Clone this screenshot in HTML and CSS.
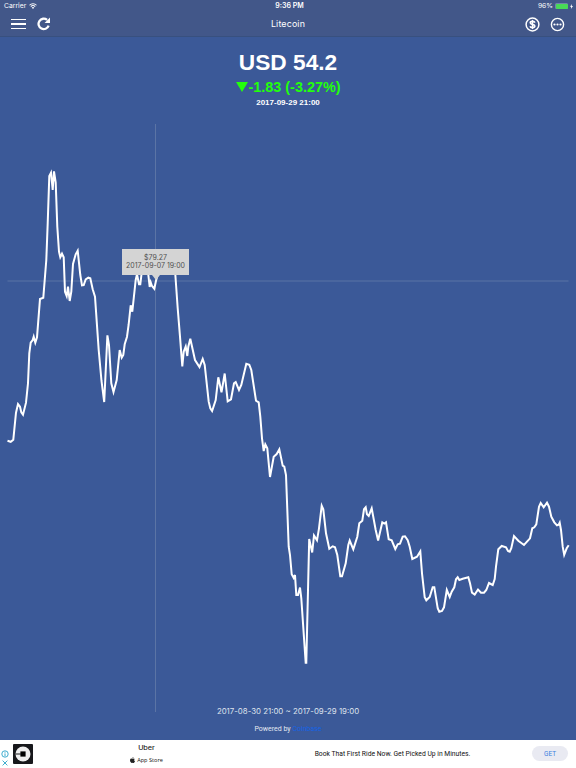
FILE: index.html
```
<!DOCTYPE html>
<html lang="en">
<head>
    <meta charset="UTF-8">
    <meta name="viewport" content="width=device-width, initial-scale=1.0">
    <title>Litecoin</title>
    <link rel="stylesheet" href="styles.css">
</head>
<body>
    <header class="header">
        <div class="status-bar">
            <div class="status-left">
                <span>Carrier</span>
                <svg class="wifi" viewBox="0 0 16 12">
                    <path d="M1 4.5a10 10 0 0 1 14 0M3.6 7.2a6.3 6.3 0 0 1 8.8 0" fill="none" stroke="#fff" stroke-width="2.1"/>
                    <path d="M8 11.8L5.4 9.1a3.7 3.7 0 0 1 5.2 0z" fill="#fff"/>
                </svg>
            </div>
            <span class="clock">9:36 PM</span>
            <div class="status-right">
                <span>96%</span>
                <span class="battery"><span class="battery-level"></span></span>
                <svg class="bolt" viewBox="0 0 6 10"><path d="M4 0L0 5.6h2.4L1.8 10 6 4.2H3.4z" fill="#fff"/></svg>
            </div>
        </div>

        <nav class="nav">
            <div class="nav-left">
                <button class="menu" aria-label="Menu"><span></span><span></span><span></span></button>
                <button aria-label="Refresh">
                    <svg class="refresh" viewBox="0 0 13 13">
                        <path d="M9.7 2.8A5 5 0 1 0 11.2 8.3" fill="none" stroke="#fff" stroke-width="2.2"/>
                        <path d="M12.5 0.6v5.2H7.3z" fill="#fff"/>
                    </svg>
                </button>
            </div>
            <h1>Litecoin</h1>
            <div class="nav-right">
                <button aria-label="Currency">
                    <svg class="round-icon" viewBox="0 0 15 15">
                        <circle cx="7.5" cy="7.5" r="6.4" fill="none" stroke="#fff" stroke-width="1.5"/>
                        <path d="M9.9 5.6C9.6 4.8 8.8 4.4 7.5 4.4 6.2 4.4 5.3 4.9 5.3 5.8 5.3 8 9.8 6.8 9.8 9.1c0 1-.9 1.5-2.3 1.5S5.3 10.100 5.100 9.200" fill="none" stroke="#fff" stroke-width="1.7"/>
                        <path d="M7.5 2.900v9.200" stroke="#fff" stroke-width="1.400"/>
                    </svg>
                </button>
                <button aria-label="More">
                    <svg class="round-icon" viewBox="0 0 15 15">
                        <circle cx="7.5" cy="7.5" r="6.1" fill="none" stroke="#fff" stroke-width="1.4"/>
                        <g fill="#fff">
                            <circle cx="4.5" cy="7.5" r="1.1"/>
                            <circle cx="7.5" cy="7.5" r="1.1"/>
                            <circle cx="10.5" cy="7.5" r="1.1"/>
                        </g>
                    </svg>
                </button>
            </div>
        </nav>
    </header>

    <main class="content">
        <section class="quote">
            <div class="price">USD 54.2</div>
            <div class="change"><span class="arrow-down"></span>-1.83 (-3.27%)</div>
            <div class="updated">2017-09-29 21:00</div>
        </section>

        <section class="chart">
            <svg viewBox="0 115 576 600">
                <path class="crosshair" d="M7.5 281H568.5M155.5 124V712"/>
                <polyline class="price-line" points="
                    7.5,440.8 10.7,441.8 13.3,439.7 16,412.7 18,404 20,406.7 21.3,412.3 23,414.7 26,402.7 28,383.3
                    29.3,353.3 30.7,342.7 32.7,340 33.7,336.7 35.3,342.7 37,337.3 40,299 43.3,297.7 46.3,260 47.7,223.3
                    49.3,176 51,172.7 52.7,190 54,171.3 55.7,182.7 57.3,226.7 59,251.7 60.3,257.3 62,253.7 63.7,257.3
                    65,291.7 66.7,296 68,286.7 69.7,301 71.3,291.7 73,264 75.7,254.3 77.7,250.7 80.3,275 82,285.3
                    83.7,285 85.7,279.3 88.3,277.7 90.3,278.3 92.7,289.3 95,296.7 98.7,350 101.5,381 104.2,402 107.4,335.3
                    109,345 111.3,383.3 113.5,392 116.7,380 119.7,350 121.7,357.7 123.3,355 124.7,344.3 127,336.7 128.6,325
                    130.7,305.3 132.3,311.7 135.7,280 137,274.3 139,284.3 140.3,284.3 142,270 145,262 148,272 149.7,287
                    150.7,282.3 152,286 154.3,288.7 156,280.7 160,266 167,258 173,262 175.3,274.3 177.7,308.3 180,336.7
                    182.3,366.5 183.7,351.7 185.7,346.5 187.3,356 188.3,346.7 190.3,338.8 195,360 199.5,367 202.7,359
                    204.7,365 208.7,401.7 210.3,408.3 212.1,411 215.7,400 218.3,377.3 221.5,392.3 224.7,373.5 227.7,401.3
                    231,399.3 234,383.3 235.7,382 239,390 241.3,385 246.3,363.7 249.3,364.7 251.3,370 256,400.7 258.7,402.3
                    260.3,416.7 262,438.3 263.7,451 265.3,444.3 267.3,448.3 270,477 273.7,456.7 276.7,454 279.3,449.3
                    282.7,465.7 284.3,466.7 286,475 288.7,546.7 290,555 291.7,574.3 293.7,578 295,575 296.3,595 298,595
                    300,587.5 301.3,598.3 305.7,662.7 306.3,662.7 309.2,539 312.2,552.5 314,535.5 317,540.3 319,528.3
                    321.7,505.7 323.3,509.3 326,533.3 329.3,548.7 332.7,546.3 335,547.3 337.3,555 340.3,576.3 342,576.3
                    345.7,563.3 348.3,545 349.7,540.5 353.3,549.3 357.3,536.7 359.3,523.3 362.3,520.7 364,509.3 365.7,507.3
                    367,514.3 368.7,516 371.7,508.3 375.7,530 378.1,540.5 382.3,522.3 384.3,523.5 386,522.3 388.7,539.3
                    391.7,540.3 395.3,549 397.7,544.3 400,543.7 402.7,536.7 405,536.3 407.7,540.3 409.7,546.7 412.3,559
                    417,556.7 420.3,551.3 422,573.3 424.7,597.3 426.3,600.3 429.7,597 432.7,587.3 434.3,587.3 437.7,608.3
                    439.3,611.7 442,611 444,607.3 446.8,590 449.7,597 451.7,591.7 454.3,587.3 456,579.3 457.7,577.3
                    459.3,580 462.7,578.7 468.3,577.3 470,583.3 472,592.7 474.7,594.5 478,589.5 481,592.7 484,592.7
                    486.3,590 489,583 492.7,585 494.7,579 496,566.7 498.3,549.3 501.7,546 506,547.3 508,551 509.7,551.7
                    511.3,548.3 514,536 518.3,540.7 524,545 530,538.3 532.3,528.3 534.3,527.3 536.3,524.3 539,506.7
                    540.7,503 543.7,507.3 547,502.7 549,506.7 551.3,516.7 554.3,522.3 557,525.3 558.7,524.7 559.7,522.7
                    561,530 562.7,546.7 564.2,554.8 566.7,548.3 568.7,545.3"/>
            </svg>
            <div class="tooltip">
                <div>$79.27</div>
                <div>2017-09-07 19:00</div>
            </div>
        </section>

        <section class="chart-footer">
            <div class="range">2017-08-30 21:00 ~ 2017-09-29 19:00</div>
            <div class="powered">Powered by <a href="#">Coinbase</a></div>
        </section>
    </main>

    <footer class="ad">
        <div class="ad-marks">
            <svg viewBox="0 0 8 8"><circle cx="4" cy="4" r="3.2"/><path d="M4 3.4v2.8M4 1.8v.9"/></svg>
            <svg viewBox="0 0 8 8"><path d="M1.6 1.6l4.8 4.8M6.4 1.6L1.6 6.4"/></svg>
        </div>
        <svg class="ad-logo" viewBox="0 0 20 20">
            <rect width="20" height="20" rx="1" fill="#17181b"/>
            <circle cx="10" cy="10" r="7.5" fill="#efefef"/>
            <rect x="7.4" y="7.4" width="5.2" height="5.2" fill="#000"/>
            <path d="M2.4 10H8" stroke="#17181b" stroke-width="1"/>
        </svg>
        <div class="ad-app">
            <div class="ad-name">Uber</div>
            <div class="ad-store">
                <svg viewBox="0 0 12 14">
                    <path d="M8.3 0c.1 1.7-1.1 3-2.6 3C5.5 1.5 6.8.2 8.3 0zM6.1 4c.7 0 1.5-.8 2.8-.8 1 0 2 .5 2.6 1.4-2.3 1.4-1.9 4.4.5 5.3-.6 1.7-1.9 4-3.3 4-.9 0-1.300-.6-2.400-.6s-1.500.6-2.400.6C2 13.900 0 10.500 0 7.700 0 4.900 1.700 3.300 3.500 3.300 4.700 3.300 5.500 4 6.100 4z"/>
                </svg>
                <span>App Store</span>
            </div>
        </div>
        <div class="ad-text">Book That First Ride Now. Get Picked Up in Minutes.</div>
        <button class="ad-button">GET</button>
    </footer>
</body>
</html>
```
FILE: styles.css
```
* {
    box-sizing: border-box;
}

body {
    display: flex;
    flex-direction: column;
    height: 768px;
    margin: 0;
    overflow: hidden;
    background: #3b5998;
    color: #fff;
    font-family: Inter, 'Liberation Sans', sans-serif;
}

button {
    display: block;
    padding: 0;
    border: none;
    background: none;
}

svg {
    display: block;
}

.header {
    height: 37px;
    background: #425789;
    border-bottom: 1px solid #38507f;
}

.status-bar {
    display: grid;
    grid-template-columns: 1fr auto 1fr;
    align-items: center;
    height: 12px;
    padding: 0 3px 0 4px;
    font-size: 6.8px;
    line-height: 12px;
}

.status-left, .status-right {
    display: flex;
    align-items: center;
}

.status-left {
    gap: 3px;
}

.status-right {
    justify-content: flex-end;
    gap: 2px;
}

.wifi {
    width: 8px;
    height: 6px;
}

.clock {
    padding-left: 2px;
    font-size: 7px;
    font-weight: 600;
}

.battery {
    width: 13px;
    height: 6px;
    padding: 0.5px;
    border-radius: 1.5px;
    background: #7285a9;
}

.battery-level {
    display: block;
    height: 5px;
    border-radius: 1px;
    background: #48d957;
}

.bolt {
    width: 3px;
    height: 5px;
}

.nav {
    display: grid;
    grid-template-columns: 1fr auto 1fr;
    align-items: center;
    height: 24px;
    padding: 0 11px;
}

.nav h1 {
    margin: 0;
    font-size: 8.9px;
    font-weight: 400;
    line-height: 10px;
    letter-spacing: 0.15px;
}

.nav-left, .nav-right {
    display: flex;
    align-items: center;
}

.nav-left {
    gap: 11px;
}

.nav-right {
    justify-content: flex-end;
    gap: 10.5px;
}

.menu {
    display: flex;
    flex-direction: column;
    gap: 3.5px;
    width: 15px;
}

.menu span {
    height: 1.2px;
    background: #fff;
}

.refresh {
    width: 13.5px;
    height: 13.5px;
}

.round-icon {
    width: 15px;
    height: 15px;
}

.content {
    display: flex;
    flex-direction: column;
    height: 702.5px;
}

.quote {
    height: 78px;
    padding-top: 12px;
    font-family: 'Liberation Sans', Arial, sans-serif;
    font-weight: bold;
    text-align: center;
}

.price {
    font-size: 22.7px;
    line-height: 26px;
}

.change {
    display: flex;
    justify-content: center;
    align-items: center;
    gap: 1px;
    color: #23ff0b;
    font-size: 14.4px;
    line-height: 24px;
}

.arrow-down {
    border: 6px solid transparent;
    border-top: 10px solid #23ff0b;
    border-bottom: none;
}

.updated {
    font-size: 8px;
    line-height: 8px;
}

.chart {
    position: relative;
    height: 590px;
}

.chart svg {
    width: 576px;
    height: 600px;
}

.crosshair {
    fill: none;
    stroke: #5b74a5;
    stroke-width: 1;
}

.price-line {
    fill: none;
    stroke: #fff;
    stroke-width: 2;
    stroke-linejoin: miter;
}

.tooltip {
    position: absolute;
    top: 134px;
    left: 122px;
    width: 67px;
    height: 26px;
    padding-top: 5px;
    background: #d4d4d4;
    color: #515151;
    font-size: 7px;
    line-height: 8px;
    text-align: center;
    white-space: nowrap;
}

.tooltip::after {
    content: '';
    position: absolute;
    top: 26px;
    left: 30px;
    border: 4px solid transparent;
    border-top: 5px solid #d4d4d4;
    border-bottom: none;
}

.chart-footer {
    text-align: center;
}

.range {
    height: 14px;
    color: #dee3ed;
    font-size: 7.85px;
    line-height: 13px;
}

.powered {
    margin-top: 4px;
    color: #e5e9f1;
    font-family: Roboto, sans-serif;
    font-size: 7px;
    line-height: 12px;
}

.powered a {
    color: #1663e5;
    text-decoration: none;
}

.ad {
    display: flex;
    align-items: center;
    height: 28.5px;
    background: #fff;
    color: #111;
    font-family: Roboto, sans-serif;
}

.ad-marks {
    display: flex;
    flex-direction: column;
    gap: 1px;
    width: 13px;
    padding: 10px 0 0 1px;
}

.ad-marks svg {
    width: 8px;
    height: 8px;
    fill: none;
    stroke: #2ba4c8;
    stroke-width: 0.9;
}

.ad-logo {
    width: 20px;
    height: 20px;
}

.ad-app {
    width: 227px;
    text-align: center;
}

.ad-name {
    font-size: 8px;
    line-height: 13px;
}

.ad-store {
    display: flex;
    justify-content: center;
    align-items: center;
    gap: 2px;
    font-family: 'Open Sans', sans-serif;
    font-size: 5.6px;
    line-height: 13px;
}

.ad-store svg {
    width: 5px;
    height: 6px;
    fill: #222;
}

.ad-text {
    width: 264px;
    padding-left: 1px;
    text-align: center;
    font-size: 6.75px;
}

.ad-button {
    width: 36px;
    height: 15px;
    margin-left: 8px;
    border-radius: 8px;
    background: #e9eaf2;
    color: #3d80df;
    font-family: Roboto, sans-serif;
    font-size: 6.5px;
}
```
